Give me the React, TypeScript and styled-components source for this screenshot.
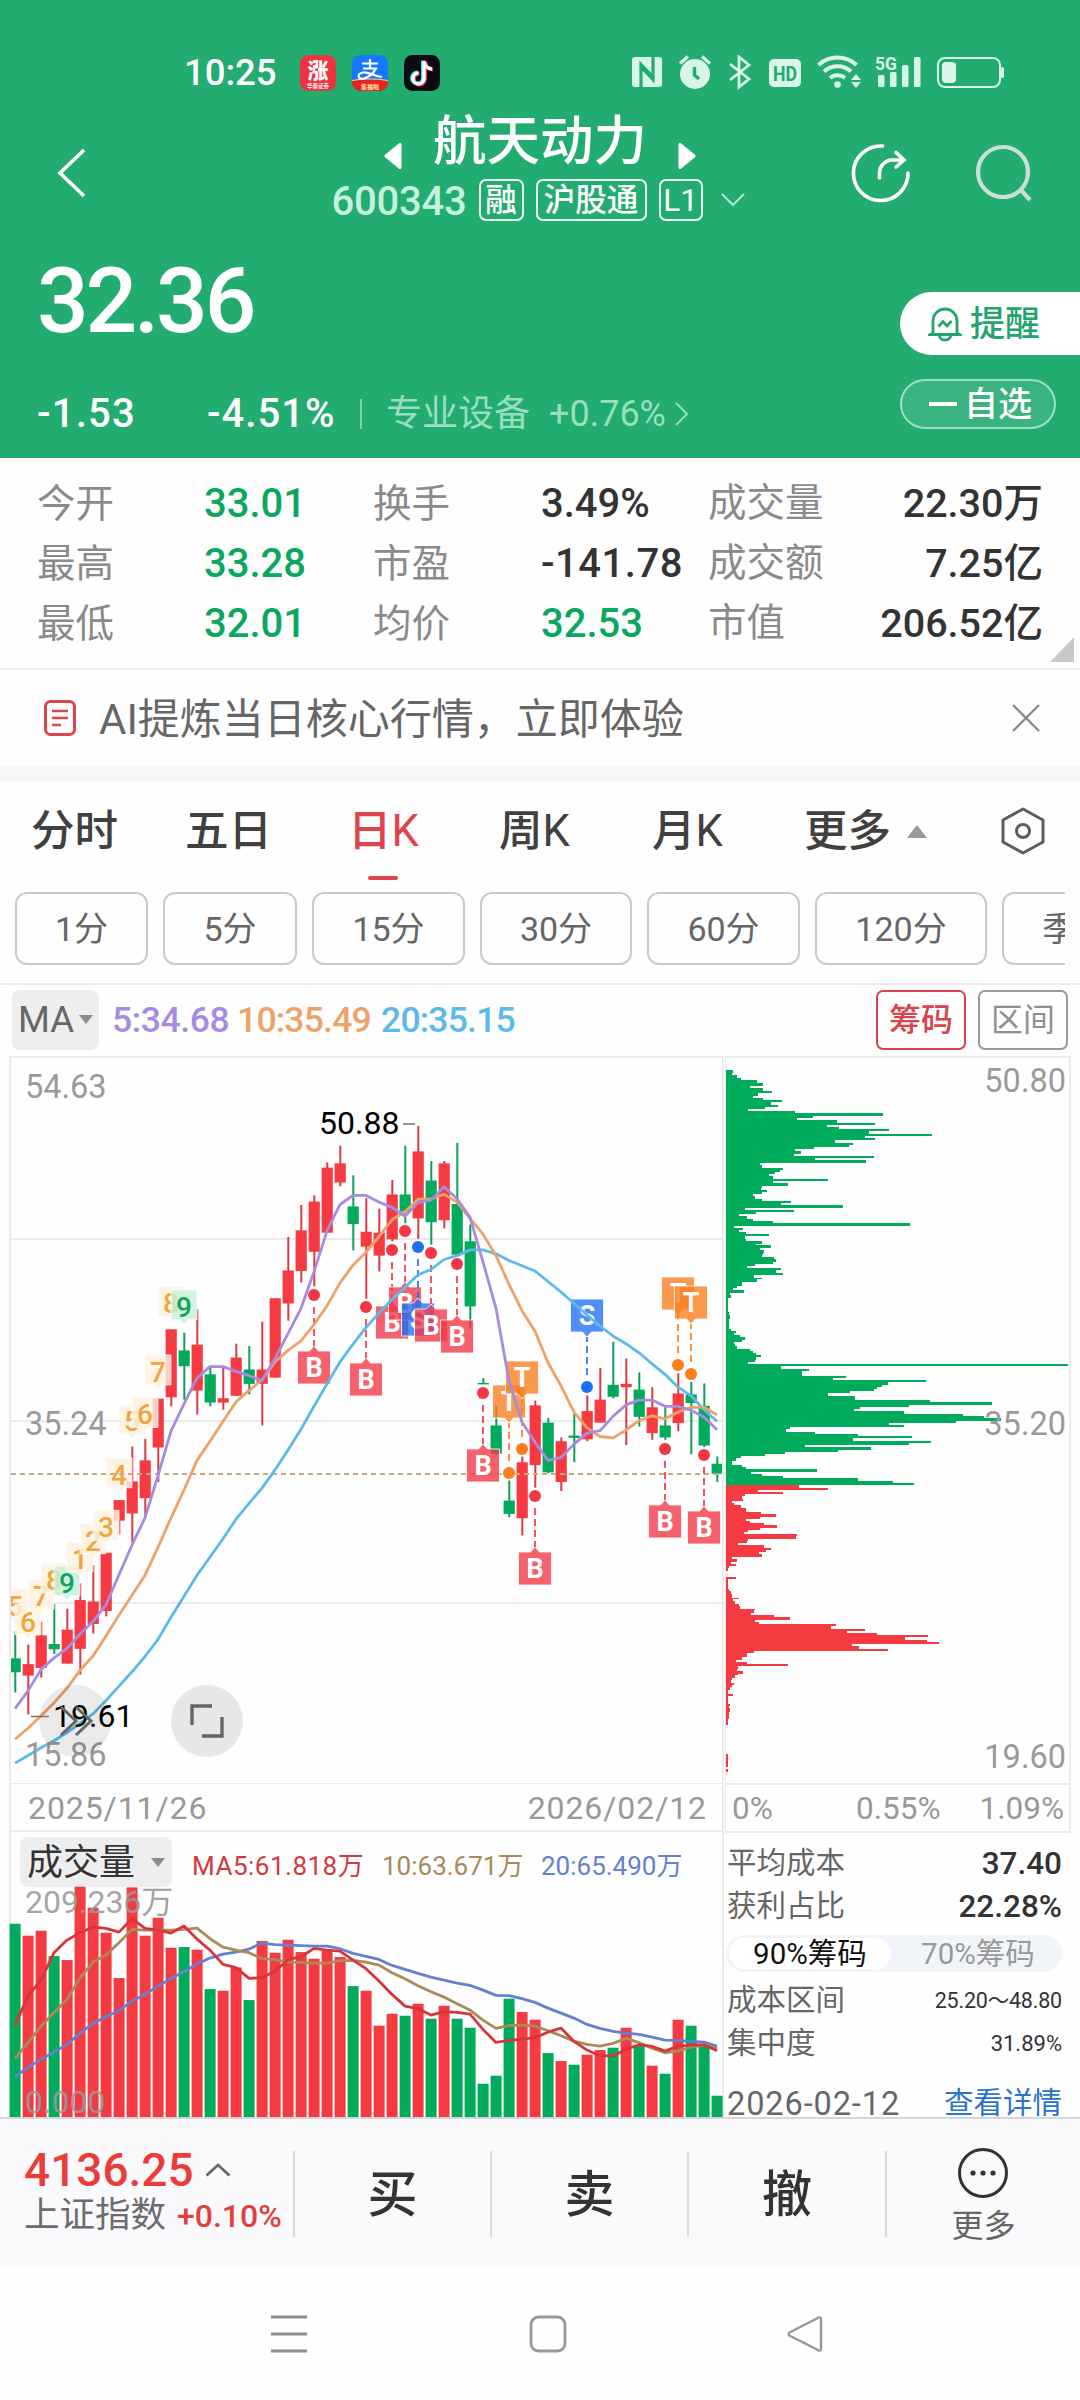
import React from "react";
import styled, { createGlobalStyle } from "styled-components";

const RED = "#f63a42";
const GREEN = "#00ab5c";
const FONT = `Roboto, "Noto Sans CJK SC", sans-serif`;

const GlobalStyle = createGlobalStyle`
  * { box-sizing: border-box; }
  body { margin: 0; background: #fff; font-family: ${FONT}; }
  svg { display: block; flex: none; }
  svg text { font-family: ${FONT}; }
`;

const Screen = styled.div`
  width: 1080px;
  height: 2400px;
  overflow: hidden;
  display: flex;
  flex-direction: column;
  background: #fefefe;
`;

const Label = styled.span<{ $size: number; $color?: string; $weight?: number; $track?: number; $w?: number; $gap?: number; $drop?: number }>`
  display: block;
  flex: none;
  white-space: nowrap;
  line-height: 1;
  font-size: ${(p) => p.$size}px;
  color: ${(p) => p.$color ?? "#333"};
  font-weight: ${(p) => p.$weight ?? 400};
  letter-spacing: ${(p) => p.$track ?? 0}px;
  width: ${(p) => (p.$w ? `${p.$w}px` : "auto")};
  margin-left: ${(p) => p.$gap ?? 0}px;
  margin-top: ${(p) => p.$drop ?? 0}px;
`;

/* ---------- header ---------- */

const Header = styled.header`
  flex: none;
  height: 458px;
  background: #22ac70;
  color: #fff;
`;

const StatusBar = styled.div`
  height: 100px;
  padding: 46px 74px 0 184px;
  display: flex;
  justify-content: space-between;
`;

const StatusGroup = styled.div<{ $gap: number }>`
  height: 54px;
  display: flex;
  align-items: center;
  gap: ${(p) => p.$gap}px;
`;

const TitleBar = styled.div`
  height: 145px;
  display: grid;
  grid-template-columns: 312px 1fr 312px;
`;

const Side = styled.div<{ $end?: boolean }>`
  display: flex;
  align-items: center;
  justify-content: ${(p) => (p.$end ? "flex-end" : "flex-start")};
  gap: ${(p) => (p.$end ? 63 : 0)}px;
  padding: ${(p) => (p.$end ? "0 48px 0 0" : "0 0 0 56px")};
`;

const TitleStack = styled.div`
  display: flex;
  flex-direction: column;
  align-items: center;
  padding-top: 13px;
  gap: 12px;
`;

const TitleRow = styled.div`
  width: 312px;
  height: 54px;
  display: flex;
  align-items: center;
  justify-content: space-between;
  & > svg { margin-top: 31px; }
`;

const CodeRow = styled.div`
  height: 42px;
  display: flex;
  align-items: center;
  gap: 12px;
  margin-left: -4px;
`;

const Tag = styled.span<{ $w: number }>`
  width: ${(p) => p.$w}px;
  height: 42px;
  border: 2px solid #e9fff5;
  border-radius: 7px;
  font-size: 31.5px;
  font-weight: 450;
  line-height: 39px;
  text-align: center;
  white-space: nowrap;
`;

const PriceArea = styled.div`
  height: 213px;
  display: flex;
  justify-content: space-between;
`;

const PriceColumn = styled.div`
  padding-left: 37px;
`;

const PriceRow = styled.div<{ $h: number }>`
  height: ${(p) => p.$h}px;
  padding-top: 2px;
  display: flex;
  align-items: center;
`;

const Separator = styled.i<{ $h: number; $color: string; $gap?: number }>`
  flex: none;
  width: 2px;
  height: ${(p) => p.$h}px;
  background: ${(p) => p.$color};
  margin: 0 ${(p) => p.$gap ?? 0}px;
`;

const ActionColumn = styled.div`
  width: 180px;
  padding-top: 47px;
  display: flex;
  flex-direction: column;
  gap: 24px;
`;

const AlertButton = styled.button`
  height: 63px;
  border: 0;
  padding: 0 0 0 28px;
  border-radius: 32px 0 0 32px;
  background: #fff;
  font-family: ${FONT};
  display: flex;
  align-items: center;
  gap: 8px;
`;

const FavouriteButton = styled.button`
  width: 156px;
  height: 50px;
  padding: 0 0 0 27px;
  border: 2px solid #9fe0c2;
  border-radius: 25px;
  background: #3ab47e;
  font-family: ${FONT};
  display: flex;
  align-items: center;
  gap: 7px;
`;

/* ---------- quote statistics ---------- */

const Stats = styled.section`
  flex: none;
  height: 212px;
  padding: 16px 6px 0 37px;
  border-bottom: 2px solid #ececec;
  display: flex;
  justify-content: space-between;
  align-items: flex-end;
`;

const StatGrid = styled.div`
  align-self: flex-start;
  display: grid;
  grid-template-columns: 167px 169px 168px 167px 335px;
  grid-auto-rows: 60px;
  align-items: center;
`;

const StatPair = styled.div`
  display: flex;
  justify-content: space-between;
`;

const Corner = styled.i`
  width: 24px;
  height: 25px;
  margin-bottom: 6px;
  background: #c8c8c8;
  clip-path: polygon(100% 0, 100% 100%, 0 100%);
`;

const Banner = styled.section`
  flex: none;
  height: 111px;
  padding: 0 40px 0 43px;
  border-bottom: 15px solid #f7f7f7;
  display: flex;
  align-items: center;
  & > svg:last-child { margin-left: auto; }
`;

/* ---------- period tabs ---------- */

const Tabs = styled.nav`
  flex: none;
  height: 111px;
  padding: 0 34px 0 31px;
  display: flex;
`;

const Tab = styled.div<{ $w: number; $active?: boolean }>`
  width: ${(p) => p.$w}px;
  height: 100px;
  font-size: 43.5px;
  line-height: 103px;
  color: ${(p) => (p.$active ? "#e1434a" : "#404040")};
  font-weight: 450;
  white-space: nowrap;
  display: flex;
  align-items: center;
  gap: 16px;
  position: relative;
  &::after {
    content: "";
    display: ${(p) => (p.$active ? "block" : "none")};
    position: absolute;
    left: 20px;
    top: 95px;
    width: 30px;
    height: 4px;
    border-radius: 2px;
    background: #e1434a;
  }
`;

const Periods = styled.div`
  flex: none;
  width: 1065px;
  height: 91px;
  padding: 0 0 0 15px;
  overflow: hidden;
  display: flex;
  gap: 15px;
`;

const Period = styled.div<{ $w: number }>`
  flex: none;
  width: ${(p) => p.$w}px;
  height: 73px;
  border: 2px solid #cacaca;
  border-radius: 12px;
  font-size: 34px;
  line-height: 70px;
  text-align: center;
  color: #666;
`;

const IndicatorBar = styled.div`
  flex: none;
  height: 73px;
  border-top: 2px solid #ebebeb;
  padding: 0 12px 2px 12px;
  display: flex;
  align-items: center;
`;

const Selector = styled.div<{ $w: number; $h: number; $pad: number }>`
  flex: none;
  width: ${(p) => p.$w}px;
  height: ${(p) => p.$h}px;
  padding: 0 ${(p) => p.$pad}px;
  border-radius: 8px;
  background: #eee;
  display: flex;
  align-items: center;
  justify-content: space-between;
`;

const Toggle = styled.div<{ $on?: boolean }>`
  width: 90px;
  height: 60px;
  margin-left: ${(p) => (p.$on ? "auto" : "12px")};
  border: 2px solid ${(p) => (p.$on ? "#d8434d" : "#999")};
  border-radius: 7px;
  color: ${(p) => (p.$on ? "#d8434d" : "#8f8f8f")};
  font-size: 32px;
  font-weight: ${(p) => (p.$on ? 500 : 400)};
  line-height: 57px;
  text-align: center;
`;

/* ---------- charts ---------- */

const Charts = styled.section`
  flex: none;
  height: 1061px;
  padding: 0 9px;
  display: grid;
  grid-template-columns: 716px 1fr;
`;

const Column = styled.div`
  display: flex;
  flex-direction: column;
  min-width: 0;
`;

const LeftFrame = styled(Column)`
  border-left: 2px solid #ebebeb;
  border-right: 2px solid #ebebeb;
  width: 715px;
`;

const RightFrame = styled.div`
  border: 2px solid #ebebeb;
  border-left-width: 1px;
  height: 777px;
  display: flex;
  flex-direction: column;
`;

const AxisRow = styled.div<{ $pad: string }>`
  flex: none;
  height: 48px;
  padding: ${(p) => p.$pad};
  display: flex;
  align-items: center;
  justify-content: space-between;
  border-bottom: 2px solid #ebebeb;
`;

const RightAxisRow = styled(AxisRow)`
  border-bottom: 0;
  height: 46px;
`;

const VolumeHead = styled.div`
  flex: none;
  height: 54px;
  padding: 5px 0 0 9px;
  display: flex;
  align-items: flex-start;
`;

const CostPanel = styled.div`
  height: 284px;
  padding: 10px 9px 0 2px;
  overflow: hidden;
  display: flex;
  flex-direction: column;
`;

const CostRow = styled.div<{ $h: number }>`
  flex: none;
  height: ${(p) => p.$h}px;
  display: flex;
  align-items: center;
  justify-content: space-between;
`;

const Segmented = styled.div`
  flex: none;
  width: 336px;
  height: 37px;
  margin: 7px 0 7px -1px;
  padding: 3px;
  border-radius: 19px;
  background: #f1f5fa;
  display: grid;
  grid-template-columns: 162px 1fr;
`;

const Segment = styled.div<{ $on?: boolean }>`
  height: 31px;
  padding-left: ${(p) => (p.$on ? 0 : 6)}px;
  border-radius: 16px;
  background: ${(p) => (p.$on ? "#fff" : "transparent")};
  color: ${(p) => (p.$on ? "#111" : "#999")};
  font-size: 29.5px;
  line-height: 32px;
  text-align: center;
  white-space: nowrap;
`;

/* ---------- bottom bars ---------- */

const TradeBar = styled.footer`
  flex: none;
  height: 150px;
  border-top: 2px solid #d5d6da;
  background: #fafafc;
  display: grid;
  grid-template-columns: 293px 197px 197px 198px 1fr;
`;

const IndexCell = styled.div`
  padding: 27px 0 0 24px;
  display: flex;
  flex-direction: column;
`;

const IndexRow = styled.div<{ $h: number }>`
  height: ${(p) => p.$h}px;
  display: flex;
  align-items: center;
`;

const TradeCell = styled.div`
  display: flex;
  align-items: center;
  justify-content: space-between;
  height: 150px;
`;

const MoreCell = styled.div`
  display: flex;
  flex-direction: column;
  align-items: center;
  gap: 11px;
`;

const SystemNav = styled.nav`
  flex: none;
  height: 133px;
  padding: 0 257px 0 270px;
  display: flex;
  align-items: center;
  justify-content: space-between;
`;

/* ---------- data ---------- */

type Tone = "r" | "g";
type Candle = [Tone, number, number, number, number];

// tone, high, body top, body bottom, low
const candles: Candle[] = [
  ["g", 1215, 1272, 1301, 1343], ["r", 1243, 1284, 1308, 1389], ["r", 1195, 1224, 1292, 1312],
  ["g", 1158, 1242, 1253, 1263], ["r", 1168, 1212, 1283, 1283], ["r", 1115, 1150, 1252, 1306],
  ["r", 1077, 1153, 1200, 1220], ["r", 1051, 1051, 1173, 1184], ["r", 941, 941, 984, 1013],
  ["r", 829, 902, 969, 1030], ["r", 813, 858, 937, 975], ["r", 729, 729, 831, 903],
  ["r", 584, 584, 726, 745], ["g", 591, 628, 661, 731], ["r", 542, 616, 712, 762],
  ["g", 660, 678, 737, 745], ["r", 660, 728, 737, 752], ["r", 614, 643, 723, 723],
  ["g", 619, 668, 698, 720], ["r", 568, 668, 698, 785], ["r", 519, 519, 685, 685],
  ["r", 391, 461, 530, 566], ["r", 324, 377, 462, 486], ["r", 304, 317, 422, 494],
  ["r", 235, 246, 382, 382], ["r", 200, 237, 277, 285], ["g", 262, 327, 364, 419],
  ["r", 310, 380, 411, 520], ["r", 332, 382, 430, 463], ["r", 272, 302, 396, 400],
  ["g", 200, 302, 338, 362], ["r", 159, 212, 352, 395], ["g", 232, 273, 360, 407],
  ["r", 232, 237, 356, 373], ["g", 194, 322, 428, 432], ["g", 365, 400, 536, 582],
  ["g", 686, 696, 698, 698], ["g", 744, 785, 844, 847], ["g", 900, 942, 970, 977],
  ["r", 850, 862, 979, 1015], ["r", 733, 743, 868, 915], ["g", 769, 779, 883, 885],
  ["r", 810, 818, 903, 922], ["g", 760, 806, 811, 862], ["r", 722, 755, 814, 818],
  ["r", 665, 731, 779, 779], ["g", 610, 700, 725, 728], ["r", 645, 698, 705, 826],
  ["g", 674, 710, 767, 787], ["r", 705, 747, 801, 815], ["g", 745, 785, 810, 815],
  ["r", 676, 718, 780, 797], ["g", 694, 720, 738, 845], ["g", 697, 744, 827, 830],
  ["g", 850, 865, 886, 903],
];

const ma5 = [1377, 1340, 1295, 1271, 1251, 1221, 1195, 1160, 1097, 1035, 978, 890, 797, 740, 686, 662, 662, 672, 681, 691, 645, 593, 540, 464, 378, 323, 304, 304, 318, 329, 348, 319, 314, 286, 311, 350, 443, 540, 692, 778, 820, 858, 852, 824, 801, 796, 766, 742, 732, 732, 745, 745, 753, 767, 794];
const ma10 = [1441, 1418, 1392, 1365, 1334, 1297, 1267, 1225, 1181, 1140, 1098, 1040, 978, 920, 858, 818, 777, 736, 712, 690, 652, 628, 608, 574, 535, 487, 450, 423, 390, 355, 338, 312, 311, 302, 318, 352, 385, 430, 490, 545, 588, 654, 702, 757, 790, 808, 811, 795, 775, 765, 771, 757, 747, 747, 763];
const ma20 = [1491, 1475, 1459, 1444, 1427, 1408, 1388, 1360, 1330, 1300, 1268, 1232, 1186, 1142, 1098, 1060, 1022, 981, 948, 916, 878, 836, 793, 745, 698, 652, 615, 580, 550, 521, 496, 470, 459, 438, 430, 418, 418, 426, 440, 451, 462, 484, 506, 530, 554, 577, 598, 614, 633, 656, 678, 705, 723, 752, 776];

const volumes = [433, 469, 454, 530, 542, 322, 385, 460, 596, 324, 469, 415, 505, 503, 511, 629, 634, 564, 662, 485, 520, 481, 518, 538, 515, 533, 620, 634, 739, 703, 709, 673, 718, 679, 718, 745, 913, 889, 658, 698, 721, 821, 845, 856, 826, 812, 805, 745, 796, 859, 883, 721, 739, 796, 949];
const volumeTones = "grrgrrrrrrrrrgrgrrgrrrrrrrgrrrgrgrgggggrrgrgrrgrgrgrggg".split("") as Tone[];
const vol5 = [738, 650, 602, 520, 482, 460, 443, 447, 458, 418, 447, 452, 461, 440, 479, 512, 555, 565, 597, 595, 575, 541, 532, 507, 512, 515, 542, 568, 605, 645, 680, 688, 707, 697, 699, 704, 750, 789, 783, 779, 775, 758, 746, 786, 812, 830, 829, 810, 796, 801, 815, 800, 797, 796, 814];
const vol10 = [838, 790, 740, 700, 660, 596, 548, 527, 490, 450, 452, 452, 452, 450, 446, 478, 503, 512, 520, 538, 541, 548, 549, 551, 551, 544, 543, 548, 557, 580, 598, 619, 637, 653, 673, 692, 722, 747, 738, 737, 740, 754, 769, 785, 795, 800, 792, 777, 790, 806, 820, 815, 803, 797, 808];
const vol20 = [892, 864, 840, 818, 795, 762, 732, 712, 693, 666, 644, 620, 597, 576, 554, 536, 524, 518, 509, 491, 496, 497, 499, 500, 500, 508, 522, 531, 540, 558, 570, 582, 593, 602, 611, 618, 632, 648, 649, 658, 669, 686, 701, 716, 735, 747, 756, 761, 765, 773, 782, 783, 786, 788, 800];

// level, extent
const chips: [number, number][] = [
  [45, 70], [50, 65], [55, 82], [60, 92], [66, 140], [72, 158], [77, 120], [82, 158], [88, 185], [93, 145], [98, 130], [102, 160], [107, 215], [112, 182], [117, 204], [121, 165], [125, 115],
  [130, 255], [135, 519], [140, 308], [144, 262], [149, 380], [154, 495], [159, 350], [163, 388], [168, 536], [172, 478], [177, 667], [182, 465], [187, 494], [191, 375], [196, 428], [201, 418], [206, 312], [210, 256], [214, 274], [219, 252], [224, 492], [229, 315], [233, 467],
  [238, 150], [243, 155], [248, 218], [253, 210], [258, 195], [262, 176], [266, 190], [271, 354], [276, 190], [280, 235], [286, 156], [290, 153], [294, 171], [300, 155], [304, 130], [308, 135], [313, 155], [318, 242], [322, 212], [327, 398], [332, 105], [336, 251], [341, 138], [346, 88], [350, 110], [355, 130], [360, 188], [365, 600],
  [370, 72], [374, 100], [379, 88], [383, 108], [388, 178], [392, 105], [397, 108], [402, 155], [407, 138], [411, 182], [416, 150], [421, 163], [426, 160], [431, 157], [435, 192], [440, 197], [445, 190], [450, 134], [454, 112], [459, 212], [463, 198], [468, 218], [473, 132], [478, 156], [482, 140], [487, 97], [491, 95], [495, 80], [500, 70], [505, 102], [510, 60], [515, 62], [520, 54],
  [550, 58], [556, 60], [565, 57], [572, 58], [577, 57], [585, 64], [589, 79], [594, 72], [599, 90], [603, 104], [608, 95], [613, 72], [617, 74], [622, 82], [627, 120], [632, 130], [636, 138], [641, 153], [645, 138], [650, 135], [655, 115],
  [659, 1074], [664, 212], [669, 297], [673, 277], [678, 275], [683, 408], [688, 370], [692, 648], [697, 535], [702, 515], [707, 502], [712, 492], [716, 420], [720, 354], [725, 434], [730, 436], [735, 660], [739, 846], [744, 596], [749, 450], [753, 432], [758, 582], [763, 758], [768, 822], [772, 873], [777, 738], [782, 538], [786, 582], [791, 240], [795, 228], [800, 314], [805, 444], [809, 607], [814, 428], [819, 662], [824, 597], [828, 285], [833, 483], [838, 385], [842, 225], [847, 165], [852, 92], [856, 78], [861, 66], [866, 66], [870, 95], [875, 108], [879, 320], [884, 124], [888, 156], [893, 220], [898, 444], [903, 549], [908, 611],
  [912.5, 268], [917, 355], [922, 145], [926, 220], [931, 105], [935, 95], [940, 98], [945, 66], [949, 72], [954, 92], [959, 108], [963, 108], [968, 152], [973, 197], [978, 150], [982, 108], [987, 120], [992, 162], [996, 200], [1001, 150], [1006, 115], [1010, 102], [1015, 261], [1019, 258], [1024, 115], [1029, 110], [1034, 85], [1038, 162], [1043, 182], [1048, 168], [1052, 148], [1057, 156], [1062, 66], [1067, 80], [1072, 64], [1077, 78], [1081, 56], [1086, 55], [1091, 48],
  [1104, 77], [1109, 54], [1130, 58], [1134, 62], [1139, 66], [1143, 66], [1147, 86], [1151, 70], [1155, 74], [1160, 86], [1165, 90], [1170, 136], [1174, 132], [1179, 124], [1184, 193], [1188, 239], [1193, 135], [1198, 148], [1202, 378], [1207, 362], [1212, 466], [1217, 410], [1221, 500], [1226, 654], [1230, 585], [1235, 652], [1240, 686], [1245, 425], [1249, 447], [1254, 533], [1258, 132], [1263, 112], [1268, 110], [1272, 95], [1277, 78], [1282, 112], [1287, 234], [1291, 85], [1296, 82], [1301, 98], [1306, 85], [1310, 75], [1315, 66], [1320, 64], [1325, 72], [1330, 66], [1335, 60], [1340, 54], [1348, 68], [1352, 54], [1370, 60], [1374, 56], [1379, 60], [1386, 57], [1400, 54], [1413, 48], [1474, 54], [1502, 48], [1506, 54], [1511, 48],
];

type Mark = { at: number; dot: number; kind: "B" | "S" | "T"; above?: boolean };
const marks: Mark[] = [
  { at: 23, dot: 239, kind: "B" }, { at: 27, dot: 251, kind: "B" }, { at: 29, dot: 194, kind: "B" },
  { at: 30, dot: 175, kind: "B" }, { at: 31, dot: 191, kind: "S" }, { at: 32, dot: 197, kind: "B" },
  { at: 34, dot: 208, kind: "B" }, { at: 36, dot: 337, kind: "B" }, { at: 38, dot: 417, kind: "T", above: true },
  { at: 39, dot: 393, kind: "T", above: true }, { at: 40, dot: 440, kind: "B" }, { at: 44, dot: 331, kind: "S", above: true },
  { at: 50, dot: 393, kind: "B" }, { at: 51, dot: 309, kind: "T", above: true }, { at: 52, dot: 318, kind: "T", above: true },
  { at: 53, dot: 399, kind: "B" },
];
const markFill = { B: "#f23645", S: "#1f6ff5", T: "#fa7d1e" };

const counts: [number, number, string][] = [
  [0, 1162, "5"], [1, 1195, "6"], [2, 1142, "7"], [3, 1108, "8"], [4, 1114, "9"], [5, 1064, "1"], [6, 1026, "2"],
  [7, 998, "3"], [8, 888, "4"], [9, 776, "5"], [10, 762, "6"], [11, 673, "7"], [12, 530, "8"], [13, 537, "9"],
];

/* The plot starts 11px from the screen edge; sessions are 13px apart. */
const px = (i: number) => 4 + i * 13;
const py = (v: number) => v * 0.4783 - 6;
const vy = (v: number) => v / 3 - 106.6;
const line = (values: number[], y: (v: number) => number) =>
  values.map((v, i) => `${i ? "L" : "M"}${px(i)} ${y(v).toFixed(1)}`).join("");

const MarkTag = ({ at, dot, kind, above }: Mark) => {
  const x = px(at);
  const top = above ? dot - 88 : dot + 56;
  const fill = markFill[kind];
  const shape = above
    ? `M${x - 16.5} ${top}h33v33h-12l-4.500 5l-4.500 -5h-12z`
    : `M${x - 16.5} ${top}h12l4.500 -5l4.500 5h12v33h-33z`;
  return (
    <g>
      <line x1={x} x2={x} y1={above ? dot - 12 : dot + 12} y2={above ? top + 38 : top - 4} stroke={fill} strokeOpacity={0.85} strokeWidth={2} strokeDasharray="7 4" />
      <circle cx={x} cy={dot} r={6} fill={fill} />
      <path d={shape} fill={fill} fillOpacity={0.78} stroke="#fff" strokeWidth={0.8} />
      <text x={x} y={top + 26} fontSize={27} fontWeight={700} fill="#fff" textAnchor="middle">{kind}</text>
    </g>
  );
};

const PriceChart = () => (
  <svg width="711" height="728" viewBox="0 0 711 728">
    <g stroke="#ebebeb" strokeWidth="2">
      <path d="M0 1H712M0 183H712M0 365H712M0 547H712M0 728H712" />
    </g>
    {candles.map(([tone, high, top, bottom, low], i) => {
      const fill = tone === "r" ? RED : GREEN;
      return (
        <g key={i}>
          <line x1={px(i) + 0.3} x2={px(i) + 0.3} y1={py(high)} y2={py(low)} stroke={tone === "r" ? "#d93a42" : "#0c9f5b"} strokeWidth={2} />
          <rect x={px(i) - 5.4} width={11.2} y={py(top)} height={Math.max(1.5, py(bottom) - py(top))} fill={fill} />
        </g>
      );
    })}
    {counts.map(([i, v, n], k) => {
      const x = px(i);
      const y = py(v);
      const green = n === "9";
      return (
        <g key={k}>
          <path d={`M${x - 13} ${y - 17}h26v30h-9l-4 4l-4 -4h-9z`} fill={green ? "#c9efdb" : "#fef0df"} fillOpacity={0.82} stroke="#fff" strokeWidth="0.8" />
          <text x={x} y={y + 10} fontSize={28} fontWeight={500} fill={green ? "#14a35e" : "#f0a63c"} textAnchor="middle">{n}</text>
        </g>
      );
    })}
    <line x1="0" x2="712" y1="418" y2="418" stroke="#c3ab82" strokeWidth="1.800" strokeDasharray="5 4" />
    {marks.map((m) => <MarkTag key={m.at} {...m} />)}
    <g fill="none" strokeWidth="2.800" strokeLinejoin="round">
      <path d={line(ma20, py)} stroke="#5db9ea" />
      <path d={line(ma10, py)} stroke="#eda268" />
      <path d={line(ma5, py)} stroke="#a68be0" />
    </g>
    <g fontSize="32.500" fill="#999">
      <text x="14" y="42">54.63</text>
      <text x="14" y="379">35.24</text>
      <text x="14" y="710">15.86</text>
    </g>
    <circle cx="64" cy="665" r="36" fill="#000" fillOpacity="0.08" />
    <circle cx="196" cy="665" r="36" fill="#000" fillOpacity="0.09" />
    <g fontSize="32" fill="#000">
      <text x="308" y="78">50.88</text>
      <text x="42" y="671">19.61</text>
    </g>
    <path d="M392 68h12M20 660.500h18" stroke="#777" strokeWidth="1.600" fill="none" />
    <path d="M50 651l15 14l-15 14M65 651l15 14l-15 14" stroke="#666" strokeWidth="3" fill="none" />
    <path d="M181 669v-19h20M211 661v19h-20" stroke="#666" strokeWidth="3.400" fill="none" />
  </svg>
);

const ChipChart = () => {
  const x = (v: number) => (v - 48) / 3;
  return (
    <svg width="343" height="727" viewBox="0 2 343 727">
      {chips.slice(0, -1).map(([v, end], i) => (
        <rect key={v} x={0} y={py(v - 2.3)} width={x(end)} height={py(chips[i + 1][0]) - py(v)} fill={v < 910 ? GREEN : RED} shapeRendering="crispEdges" />
      ))}
      <g fontSize="32.500" fill="#999" textAnchor="end">
        <text x="340" y="36">50.80</text>
        <text x="340" y="379">35.20</text>
        <text x="340" y="712">19.60</text>
      </g>
      <path d="M0 728H345" stroke="#ebebeb" strokeWidth="2" />
    </svg>
  );
};

const VolumeSvg = styled.svg`
  overflow: visible;
`;

const VolumeChart = () => (
  <VolumeSvg width="711" height="231" viewBox="0 0 711 231">
    {volumes.map((v, i) => (
      <rect key={i} x={px(i) - 5.4} width={11} y={vy(v)} height={231 - vy(v)} fill={volumeTones[i] === "r" ? RED : GREEN} />
    ))}
    <g fill="none" strokeWidth="2.800" strokeLinejoin="round">
      <path d={line(vol20, vy)} stroke="#6480d0" />
      <path d={line(vol10, vy)} stroke="#ab8a58" />
      <path d={line(vol5, vy)} stroke="#d8353a" />
    </g>
    <g fontSize="32" fill="#999" fillOpacity="0.9">
      <text x="14" y="26.500">209.236万</text>
      <text x="14" y="227">0.000</text>
    </g>
  </VolumeSvg>
);

/* ---------- icons ---------- */

const AppTile = ({ fill, children }: { fill: string; children: React.ReactNode }) => (
  <svg width="36" height="36" viewBox="0 0 36 36">
    <rect width="36" height="36" rx="8.500" fill={fill} />
    {children}
  </svg>
);

const StatusIcons = () => (
  <svg width="374" height="36" viewBox="632 55 374 36" fill="none">
    <g fill="#d9f5e8">
      <rect x="632" y="57" width="30" height="30" rx="3" />
      <circle cx="695" cy="74" r="15" />
      <rect x="769" y="59" width="32" height="28" rx="5" />
      <circle cx="837.500" cy="84.500" r="3.300" />
      <path d="M856 74l5 6h-10zM856 88l5-6h-10z" />
      <rect x="878" y="75" width="6.500" height="12" rx="1.500" />
      <rect x="890" y="72" width="6.500" height="15" rx="1.500" />
      <rect x="902" y="65" width="6.500" height="22" rx="1.500" />
      <rect x="914" y="57" width="6.500" height="30" rx="1.500" />
      <rect x="942" y="62" width="14" height="21" rx="4" />
      <rect x="1001" y="67" width="3" height="11" rx="1.500" />
    </g>
    <path d="M641 87V64.500L654 78M653 57V79.500L640 66" stroke="#22ac70" strokeWidth="3.200" />
    <path d="M694.500 67v8l4.500 4" stroke="#22ac70" strokeWidth="3.400" />
    <path d="M680 63.500l8-7M710 63.500l-8-7" stroke="#d9f5e8" strokeWidth="3.200" />
    <path d="M730 64l19 15-10 8V57l10 8-19 15" stroke="#d9f5e8" strokeWidth="2.800" />
    <text x="785" y="80.500" fontSize="20" fontWeight="700" fill="#22ac70" textAnchor="middle" textLength="24" lengthAdjust="spacingAndGlyphs">HD</text>
    <g stroke="#d9f5e8" strokeWidth="4">
      <path d="M818.500 65a28 28 0 0 1 38 0M824 71.500a20 20 0 0 1 27 0M830 78a11.500 11.500 0 0 1 15 0" />
    </g>
    <text x="875" y="70" fontSize="19" fontWeight="700" fill="#d9f5e8" textLength="22" lengthAdjust="spacingAndGlyphs">5G</text>
    <rect x="938" y="58" width="62" height="29" rx="7" stroke="#d9f5e8" strokeWidth="2" />
  </svg>
);

const Caret = ({ color = "#999", w = 14, h = 9, up }: { color?: string; w?: number; h?: number; up?: boolean }) => (
  <svg width={w} height={h} viewBox="0 0 10 10" preserveAspectRatio="none">
    <path d={up ? "M5 0L10 10H0z" : "M0 0H10L5 10z"} fill={color} />
  </svg>
);

const CodeChevron = styled.svg`
  margin-left: 6px;
`;

const quotes: [string, string, boolean, string, string, boolean, string, string][] = [
  ["今开", "33.01", true, "换手", "3.49%", false, "成交量", "22.30万"],
  ["最高", "33.28", true, "市盈", "-141.78", false, "成交额", "7.25亿"],
  ["最低", "32.01", true, "均价", "32.53", true, "市值", "206.52亿"],
];

const valueColor = (down: boolean) => (down ? "#0aa75e" : "#333");

export default function App() {
  return (
    <Screen>
      <GlobalStyle />
      <Header>
        <StatusBar>
          <StatusGroup $gap={16}>
            <Label $size={36.5} $color="#fff" $weight={500} $w={100}>10:25</Label>
            <AppTile fill="#ee3340">
              <text x="18" y="23" fontSize="21" fontWeight="900" fill="#fff" textAnchor="middle">涨</text>
              <text x="18" y="33" fontSize="5.500" fontWeight="700" fill="#fff" textAnchor="middle">华泰证券</text>
            </AppTile>
            <AppTile fill="#1677ff">
              <path d="M0 26Q18 23 36 26V27.500A8.500 8.500 0 0 1 27.500 36H8.500A8.500 8.500 0 0 1 0 27.500z" fill="#e8241c" />
              <path d="M0 25.500Q18 22.500 36 25.500" stroke="#ffd27a" strokeWidth="1.200" fill="none" />
              <path d="M10 8.500H26M18 4V13.500M11 13.500H24Q20 21 12 23.500C5 25 5 18.500 11 17.500C17 17 22 21 30 22" stroke="#fff" strokeWidth="2.200" fill="none" />
              <text x="18" y="34" fontSize="6" fontWeight="700" fill="#ffe9b0" textAnchor="middle">集福啦</text>
            </AppTile>
            <AppTile fill="#0b0b12">
              <g fill="none" strokeWidth="4">
                <path d="M19 5.500V23A5.500 5.500 0 1 1 13.500 17.500M19 6Q20.500 13 27 13.500" stroke="#25f4ee" />
                <path d="M21 6.500V24A5.500 5.500 0 1 1 15.500 18.500M21 7Q22.500 14 29 14.500" stroke="#fe2c55" />
                <path d="M20 6V23.500A5.500 5.500 0 1 1 14.500 18M20 6.500Q21.500 13.500 28 14" stroke="#fff" strokeWidth="3.400" />
              </g>
            </AppTile>
          </StatusGroup>
          <StatusGroup $gap={0}>
            <StatusIcons />
          </StatusGroup>
        </StatusBar>
        <TitleBar>
          <Side>
            <svg width="30" height="50" viewBox="0 0 30 50"><path d="M28 2L4 25L28 48" stroke="#fff" strokeWidth="3.600" fill="none" /></svg>
          </Side>
          <TitleStack>
            <TitleRow>
              <svg width="18" height="26" viewBox="0 0 18 26"><path d="M16 1.500V24.500L2 13z" fill="#fff" stroke="#fff" strokeWidth="3" strokeLinejoin="round" /></svg>
              <Label $size={53.5} $color="#fff" $weight={500} $drop={4}>航天动力</Label>
              <svg width="18" height="26" viewBox="0 0 18 26"><path d="M2 1.500V24.500L16 13z" fill="#fff" stroke="#fff" strokeWidth="3" strokeLinejoin="round" /></svg>
            </TitleRow>
            <CodeRow>
              <Label $size={40} $color="#c3f3dc" $weight={500} $track={-0.2} $drop={3}>600343</Label>
              <Tag $w={45}>融</Tag>
              <Tag $w={111}>沪股通</Tag>
              <Tag $w={44}>L1</Tag>
              <CodeChevron width="24" height="14" viewBox="0 0 24 14"><path d="M1 1L12 12L23 1" stroke="#b5ead1" strokeWidth="2" fill="none" /></CodeChevron>
            </CodeRow>
          </TitleStack>
          <Side $end>
            <svg width="60" height="60" viewBox="0 0 60 60" fill="none" stroke="#fff" strokeWidth="3.600" strokeLinecap="round">
              <path d="M31.500 3A27.300 27.300 0 1 0 57 30" />
              <path d="M28.500 35V30A13 13 0 0 1 41 17H52M45 9.500L53 17L45 24" />
            </svg>
            <svg width="58" height="60" viewBox="0 0 58 60" fill="none" stroke="#c8e0d4" strokeWidth="4.200">
              <circle cx="29" cy="29" r="25" />
              <path d="M46 46L56 57" />
            </svg>
          </Side>
        </TitleBar>
        <PriceArea>
          <PriceColumn>
            <PriceRow $h={110}>
              <Label $size={91} $color="#fff" $weight={500} $track={-3.2}>32.36</Label>
            </PriceRow>
            <PriceRow $h={116}>
              <Label $size={40} $color="#fff" $weight={500} $track={1.2} $w={170}>-1.53</Label>
              <Label $size={40} $color="#fff" $weight={500} $track={1} $w={130}>-4.51%</Label>
              <Separator $h={30} $color="#7fcfa9" $gap={23} />
              <Label $size={36} $color="#97dfbe" $w={163} $gap={1}>专业设备</Label>
              <Label $size={36} $color="#97dfbe" $w={126}>+0.76%</Label>
              <svg width="14" height="24" viewBox="0 0 14 24"><path d="M1 1L12 12L1 23" stroke="#97dfbe" strokeWidth="2" fill="none" /></svg>
            </PriceRow>
          </PriceColumn>
          <ActionColumn>
            <AlertButton>
              <svg width="34" height="36" viewBox="0 0 34 36" fill="none" stroke="#24a46c" strokeWidth="2.800">
                <path d="M5 27V15A12 12 0 0 1 29 15V27L31.500 28.500H2.500zM11 29Q12 34 17 34Q22 34 23 29M10.500 20.500L15 15.500L19 20L23.500 15" />
              </svg>
              <Label $size={35} $color="#24a46c" $weight={500} $drop={2}>提醒</Label>
            </AlertButton>
            <FavouriteButton>
              <svg width="28" height="4"><rect width="28" height="4" fill="#fff" /></svg>
              <Label $size={34} $color="#fff" $weight={500}>自选</Label>
            </FavouriteButton>
          </ActionColumn>
        </PriceArea>
      </Header>

      <Stats>
        <StatGrid>
          {quotes.map(([a, av, ad, b, bv, bd, c, cv]) => (
            <React.Fragment key={a}>
              <Label $size={38.5} $color="#8a8a8a">{a}</Label>
              <Label $size={40} $color={valueColor(ad)} $weight={500}>{av}</Label>
              <Label $size={38.5} $color="#8a8a8a">{b}</Label>
              <Label $size={40} $color={valueColor(bd)} $weight={500} $track={bv.startsWith("-") ? 0.5 : 0}>{bv}</Label>
              <StatPair>
                <Label $size={38.5} $color="#8a8a8a">{c}</Label>
                <Label $size={39.5} $weight={500}>{cv}</Label>
              </StatPair>
            </React.Fragment>
          ))}
        </StatGrid>
        <Corner />
      </Stats>

      <Banner>
        <svg width="34" height="38" viewBox="0 0 34 38" fill="none" stroke="#dd4450" strokeWidth="3">
          <rect x="2.500" y="2.500" width="29" height="33" rx="5" />
          <path d="M9 12H25M9 19H25M9 26H18" strokeWidth="2.600" />
        </svg>
        <Label $size={42} $color="#666" $gap={22} $drop={3}>AI提炼当日核心行情，立即体验</Label>
        <svg width="28" height="28" viewBox="0 0 28 28"><path d="M1 1L27 27M27 1L1 27" stroke="#8c8c8c" strokeWidth="2.400" /></svg>
      </Banner>

      <Tabs>
        <Tab $w={154}>分时</Tab>
        <Tab $w={163}>五日</Tab>
        <Tab $w={151} $active>日K</Tab>
        <Tab $w={153}>周K</Tab>
        <Tab $w={152}>月K</Tab>
        <Tab $w={196}>更多<Caret up w={20} h={13} /></Tab>
        <Tab $w={46}>
          <svg width="46" height="48" viewBox="0 0 46 48" fill="none" stroke="#5c5c5c" strokeWidth="3">
            <path d="M23 2L43 13V35L23 46L3 35V13z" strokeLinejoin="round" />
            <circle cx="23" cy="24" r="6.500" />
          </svg>
        </Tab>
      </Tabs>
      <Periods>
        <Period $w={133}>1分</Period>
        <Period $w={134}>5分</Period>
        <Period $w={153}>15分</Period>
        <Period $w={152}>30分</Period>
        <Period $w={153}>60分</Period>
        <Period $w={172}>120分</Period>
        <Period $w={136}>季K</Period>
      </Periods>

      <IndicatorBar>
        <Selector $w={87} $h={60} $pad={6}>
          <Label $size={36.5} $color="#666" $drop={2}>MA</Label>
          <Caret color="#8c8c8c" />
        </Selector>
        <Label $size={35.5} $color="#a68be0" $weight={500} $track={-0.4} $w={125} $gap={13} $drop={3}>5:34.68</Label>
        <Label $size={35.5} $color="#eda268" $weight={500} $track={-0.8} $w={144} $drop={3}>10:35.49</Label>
        <Label $size={35.5} $color="#5db9ea" $weight={500} $track={-0.8} $drop={3}>20:35.15</Label>
        <Toggle $on>筹码</Toggle>
        <Toggle>区间</Toggle>
      </IndicatorBar>

      <Charts>
        <LeftFrame>
          <PriceChart />
          <AxisRow $pad="2px 15px 0 17px">
            <Label $size={32} $color="#999" $track={0.9}>2025/11/26</Label>
            <Label $size={32} $color="#999" $track={0.9}>2026/02/12</Label>
          </AxisRow>
          <VolumeHead>
            <Selector $w={152} $h={50} $pad={7}>
              <Label $size={36} $drop={2}>成交量</Label>
              <Caret color="#8c8c8c" />
            </Selector>
            <Label $size={26} $color="#cf3a40" $w={190} $gap={20} $track={0.5} $drop={16}>MA5:61.818万</Label>
            <Label $size={26} $color="#a88a58" $w={159} $drop={16}>10:63.671万</Label>
            <Label $size={26} $color="#6480d0" $drop={16}>20:65.490万</Label>
          </VolumeHead>
          <VolumeChart />
        </LeftFrame>
        <Column>
          <RightFrame>
            <ChipChart />
            <RightAxisRow $pad="2px 5px 0 6px">
              <Label $size={31.5} $color="#999" $w={121}>0%</Label>
              <Label $size={31.5} $color="#999">0.55%</Label>
              <Label $size={31.5} $color="#999" $gap={36}>1.09%</Label>
            </RightAxisRow>
          </RightFrame>
          <CostPanel>
            <CostRow $h={42}><Label $size={29.5} $color="#666">平均成本</Label><Label $size={31.5} $weight={500}>37.40</Label></CostRow>
            <CostRow $h={43}><Label $size={29.5} $color="#666">获利占比</Label><Label $size={31.5} $weight={500}>22.28%</Label></CostRow>
            <Segmented>
              <Segment $on>90%筹码</Segment>
              <Segment>70%筹码</Segment>
            </Segmented>
            <CostRow $h={43}><Label $size={29.5} $color="#666">成本区间</Label><Label $size={21.5} $track={-0.2}>25.20～48.80</Label></CostRow>
            <CostRow $h={43}><Label $size={29.5} $color="#666">集中度</Label><Label $size={22}>31.89%</Label></CostRow>
            <CostRow $h={78}><Label $size={32.5} $color="#666" $track={0.9}>2026-02-12</Label><Label $size={29.5} $color="#2b72c8">查看详情</Label></CostRow>
          </CostPanel>
        </Column>
      </Charts>

      <TradeBar>
        <IndexCell>
          <IndexRow $h={48}>
            <Label $size={46} $color="#ea3d3a" $weight={500} $w={181}>4136.25</Label>
            <svg width="26" height="14" viewBox="0 0 26 14"><path d="M1.500 12.500L13 2L24.500 12.500" stroke="#666" strokeWidth="2.600" fill="none" /></svg>
          </IndexRow>
          <IndexRow $h={44}>
            <Label $size={35.5} $color="#6b6b70" $w={153}>上证指数</Label>
            <Label $size={32} $color="#e0403f" $weight={500}>+0.10%</Label>
          </IndexRow>
        </IndexCell>
        {["买", "卖", "撤"].map((action) => (
          <TradeCell key={action}>
            <Separator $h={86} $color="#dcdcdf" />
            <Label $size={50} $weight={500} $drop={2}>{action}</Label>
            <i />
          </TradeCell>
        ))}
        <TradeCell>
          <Separator $h={86} $color="#dcdcdf" />
          <MoreCell>
            <svg width="52" height="52" viewBox="0 0 52 52" fill="#333">
              <circle cx="26" cy="26" r="23.500" fill="none" stroke="#333" strokeWidth="3" />
              <circle cx="16" cy="26" r="2.600" /><circle cx="26" cy="26" r="2.600" /><circle cx="36" cy="26" r="2.600" />
            </svg>
            <Label $size={32} $color="#666">更多</Label>
          </MoreCell>
          <i />
        </TradeCell>
      </TradeBar>

      <SystemNav>
        <svg width="38" height="38" viewBox="0 0 38 38"><path d="M1 2H37M1 19H37M1 36H37" stroke="#8e8e8e" strokeWidth="3" /></svg>
        <svg width="38" height="38" viewBox="0 0 38 38"><rect x="2" y="2" width="34" height="34" rx="7.500" fill="none" stroke="#999" strokeWidth="2.800" /></svg>
        <svg width="36" height="38" viewBox="0 0 36 38"><path d="M2.500 17.500L32 2.500Q34 2 34 4V34Q34 36 32 35.500L2.500 20.500Q1 19 2.500 17.500z" fill="none" stroke="#999" strokeWidth="2.400" /></svg>
      </SystemNav>
    </Screen>
  );
}
